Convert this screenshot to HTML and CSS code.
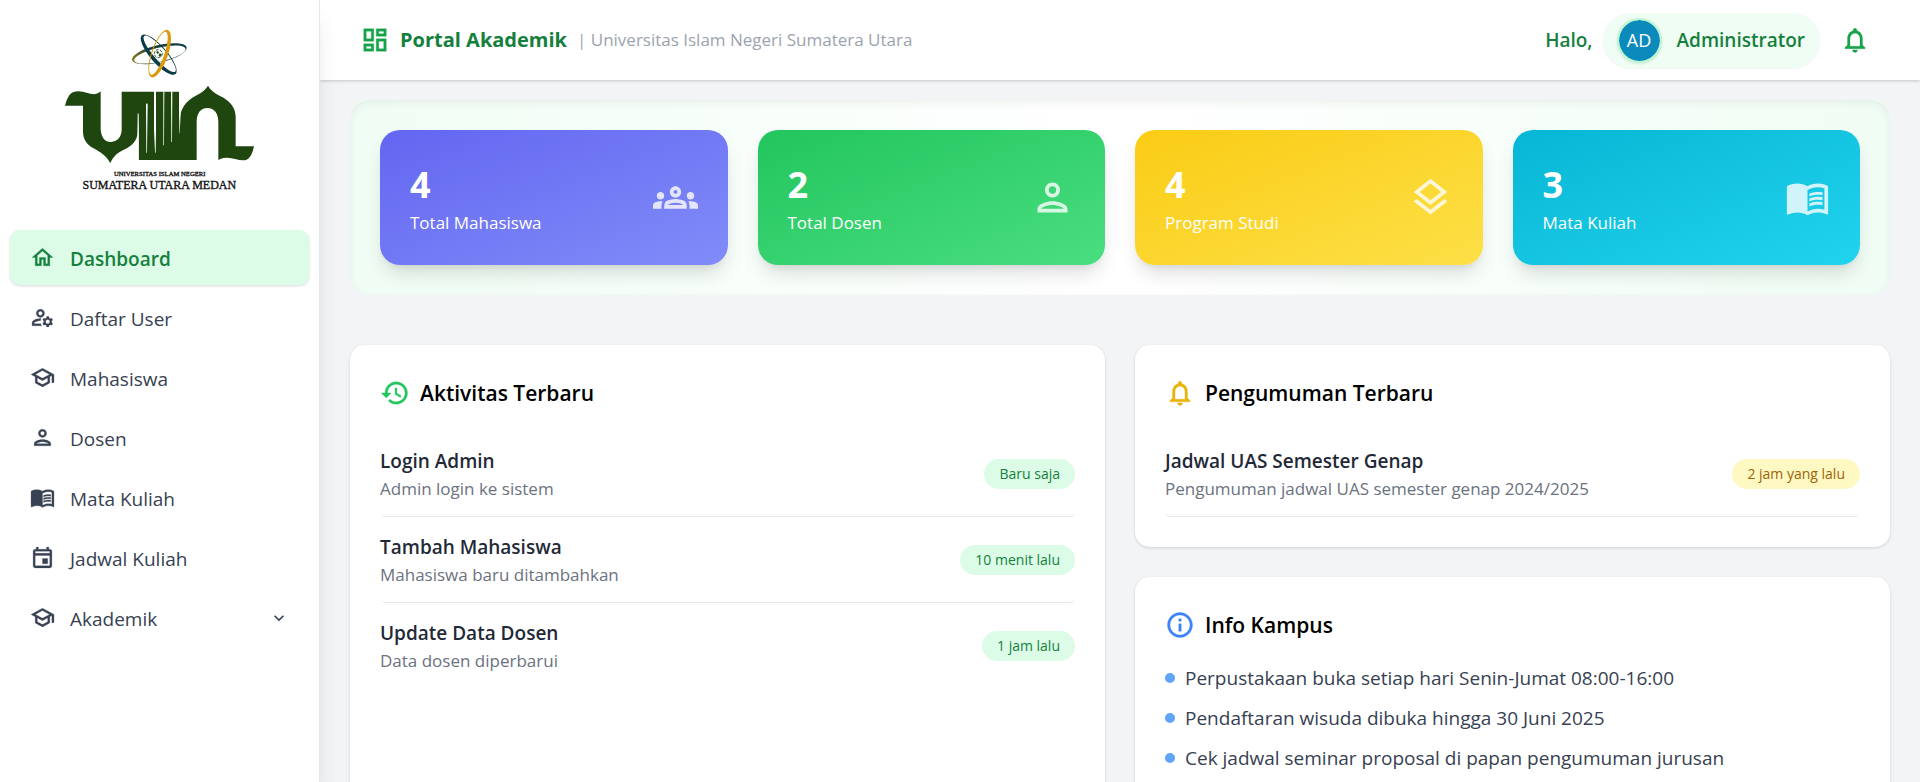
FILE: index.html
```html
<!DOCTYPE html>
<html lang="id">
<head>
<meta charset="utf-8">
<title>Portal Akademik</title>
<link rel="stylesheet" href="styles.css">
</head>
<body>
<svg class="sprite" aria-hidden="true">
  <symbol id="i-book" viewBox="0 0 24 24"><path d="M21 5c-1.11-.35-2.33-.5-3.5-.5-1.95 0-4.05.4-5.5 1.5-1.45-1.1-3.55-1.5-5.5-1.5S2.45 4.9 1 6v14.65c0 .25.25.5.5.5.1 0 .15-.05.25-.05C3.1 20.45 5.05 20 6.5 20c1.95 0 4.05.4 5.5 1.5 1.35-.85 3.8-1.5 5.5-1.5 1.65 0 3.35.3 4.75 1.05.1.05.15.05.25.05.25 0 .5-.25.5-.5V6c-.6-.45-1.25-.75-2-1zm0 13.5c-1.1-.35-2.3-.5-3.5-.5-1.7 0-4.15.65-5.5 1.5V8c1.35-.85 3.8-1.5 5.5-1.5 1.2 0 2.4.15 3.5.5v11.5z"/><path d="M17.5 10.5c.88 0 1.73.09 2.5.26V9.24c-.79-.15-1.64-.24-2.5-.24-1.7 0-3.24.29-4.5.83v1.66c1.13-.64 2.7-.99 4.5-.99zM13 12.49v1.66c1.13-.64 2.7-.99 4.5-.99.88 0 1.73.09 2.5.26V11.9c-.79-.15-1.64-.24-2.5-.24-1.7 0-3.24.3-4.5.83zM17.5 14.33c-1.7 0-3.24.29-4.5.83v1.66c1.13-.64 2.7-.99 4.5-.99.88 0 1.73.09 2.5.26v-1.52c-.79-.16-1.64-.24-2.5-.24z"/></symbol>
  <symbol id="i-school" viewBox="0 0 24 24"><path d="M12 3L1 9l4 2.18v6L12 21l7-3.82v-6l2-1.09V17h2V9L12 3zm6.82 6L12 12.72 5.18 9 12 5.28 18.82 9zM17 15.99l-5 2.73-5-2.73v-3.72L12 15l5-2.73v3.72z"/></symbol>
  <symbol id="i-person" viewBox="0 0 24 24"><path d="M12 6c1.1 0 2 .9 2 2s-.9 2-2 2-2-.9-2-2 .9-2 2-2m0 10c2.7 0 5.8 1.29 6 2H6c.23-.72 3.31-2 6-2m0-12C9.79 4 8 5.79 8 8s1.79 4 4 4 4-1.79 4-4-1.79-4-4-4zm0 10c-2.67 0-8 1.34-8 4v2h16v-2c0-2.66-5.33-4-8-4z"/></symbol>
  <symbol id="i-bell" viewBox="0 0 24 24"><path d="M12 22c1.1 0 2-.9 2-2h-4c0 1.1.9 2 2 2zm6-6v-5c0-3.07-1.63-5.64-4.5-6.32V4c0-.83-.67-1.5-1.5-1.5s-1.5.67-1.5 1.5v.68C7.64 5.36 6 7.92 6 11v5l-2 2v1h16v-1l-2-2zm-2 1H8v-6c0-2.48 1.51-4.5 4-4.5s4 2.02 4 4.5v6z"/></symbol>
</svg>

<div class="app">
  <aside class="sidebar">
    <div class="brand">
      <svg class="brand-logo" viewBox="180 80 600 510" role="img" aria-label="Universitas Islam Negeri Sumatera Utara Medan">
        <defs>
          <linearGradient id="orbit" x1="0" x2="1"><stop offset="0" stop-color="#8c7a1c"/><stop offset=".35" stop-color="#17403c"/><stop offset="1" stop-color="#0b3b44"/></linearGradient>
        </defs>
        <g fill-rule="evenodd">
          <g transform="translate(478 163) rotate(-13)"><path fill="url(#orbit)" d="M-84 0a84 26 0 1 0 168 0a84 26 0 1 0-168 0zM-78 3a79 21 0 1 0 158 0a79 21 0 1 0-158 0z"/></g>
          <g transform="translate(476 166) rotate(49)"><path fill="#0b3b44" d="M-77 0a77 25 0 1 0 154 0a77 25 0 1 0-154 0zM-71 -4a71 18 0 1 0 142 0a71 18 0 1 0-142 0z"/></g>
          <g transform="translate(479 163) rotate(-71)"><path fill="#d69a0c" d="M-75 0a75 25 0 1 0 150 0a75 25 0 1 0-150 0zM-68 -4a68 18 0 1 0 136 0a68 18 0 1 0-136 0z"/></g>
        </g>
        <circle cx="475" cy="163" r="12" fill="none" stroke="#2d5f2b" stroke-width="3" stroke-dasharray="9 3"/>
        <path d="M468 158l6-3 3 5-4 4zM478 162l7 2-4 9-5-3z" fill="#1f4a10"/>
        <path fill="#1f460f" d="M195 319C203 294 208 276 236 276C252 276 268 285 282 285C292 284 297 280 302 276V388C303 414 315 428 333 428C353 427 365 412 365 390V277H537V365C541 330 556 305 590 288C606 280 617 270 624 259C631 271 642 281 660 290C690 304 707 325 707 352V441H762C758 462 750 478 738 482C718 486 700 474 678 475C668 476 661 478 655 482V368C655 342 643 326 622 326C601 326 590 343 590 368V482H416V345L413 400C411 425 396 440 370 452C350 461 340 472 331 491C321 474 309 463 290 452C264 440 249 425 249 396V319Z"/>
        <path fill="#fff" d="M412.500 388L413 344Q414 340 416 344L416 484H413ZM438 316Q441 308 443 316L441 460H439ZM462 276H468V400L467 460H465L462 390ZM490 276H493L492 438H490ZM513 276H517L516 428H514ZM537 276H542V345L539 402H538Z"/>
        <text class="logo-small" x="479" y="529" text-anchor="middle">UNIVERSITAS ISLAM NEGERI</text>
        <text class="logo-large" x="478" y="570" text-anchor="middle">SUMATERA UTARA MEDAN</text>
      </svg>
    </div>
    <nav class="menu">
      <a class="menu-item active" href="#dashboard"><svg class="icon" viewBox="0 0 24 24"><path d="M12 5.690l5 4.500V18h-2v-6H9v6H7v-7.810l5-4.500M12 3L2 12h3v8h6v-6h2v6h6v-8h3L12 3z"/></svg><span>Dashboard</span></a>
      <a class="menu-item" href="#user"><svg class="icon" viewBox="0 0 24 24"><path d="M4 18v-.65c0-.34.16-.66.41-.81C6.1 15.53 8.03 15 10 15c.03 0 .05 0 .08.01.1-.7.3-1.37.59-1.98-.22-.02-.44-.03-.67-.03-2.42 0-4.68.67-6.61 1.82-.88.52-1.39 1.5-1.39 2.53V20h9.26c-.42-.6-.75-1.28-.97-2H4zM10 12c2.21 0 4-1.79 4-4s-1.790-4-4-4-4 1.790-4 4 1.790 4 4 4zm0-6c1.100 0 2 .9 2 2s-.9 2-2 2-2-.9-2-2 .9-2 2-2zM20.750 16c0-.22-.03-.42-.06-.63l1.140-1.010-1-1.730-1.450.49c-.32-.27-.68-.48-1.080-.63L18 11h-2l-.3 1.490c-.4.15-.76.36-1.080.63l-1.450-.49-1 1.730 1.140 1.010c-.03.21-.06.41-.06.63s.03.42.06.63l-1.140 1.010 1 1.730 1.450-.49c.32.27.68.48 1.080.63L16 21h2l.3-1.490c.4-.15.76-.36 1.080-.63l1.450.49 1-1.730-1.140-1.010c.03-.21.06-.41.06-.63zM17 18c-1.100 0-2-.9-2-2s.9-2 2-2 2 .9 2 2-.9 2-2 2z"/></svg><span>Daftar User</span></a>
      <a class="menu-item" href="#mahasiswa"><svg class="icon"><use href="#i-school"/></svg><span>Mahasiswa</span></a>
      <a class="menu-item" href="#dosen"><svg class="icon"><use href="#i-person"/></svg><span>Dosen</span></a>
      <a class="menu-item" href="#matakuliah"><svg class="icon"><use href="#i-book"/></svg><span>Mata Kuliah</span></a>
      <a class="menu-item" href="#jadwal"><svg class="icon" viewBox="0 0 24 24"><path d="M19 4h-1V2h-2v2H8V2H6v2H5c-1.110 0-1.990.9-1.990 2L3 20a2 2 0 0 0 2 2h14c1.100 0 2-.9 2-2V6c0-1.100-.9-2-2-2zm0 16H5V10h14v10zm0-12H5V6h14v2zm-7 5h5v5h-5v-5z"/></svg><span>Jadwal Kuliah</span></a>
      <button class="menu-item" type="button" aria-expanded="false"><svg class="icon"><use href="#i-school"/></svg><span>Akademik</span><svg class="chevron" viewBox="0 0 24 24"><path d="M16.590 8.590L12 13.170 7.410 8.590 6 10l6 6 6-6z"/></svg></button>
    </nav>
  </aside>

  <div class="page">
    <header class="topbar">
      <svg class="icon-lg green" viewBox="0 0 24 24"><path d="M19 5v2h-4V5h4M9 5v6H5V5h4m10 8v6h-4v-6h4M9 17v2H5v-2h4M21 3h-8v6h8V3zM11 3H3v10h8V3zm10 8h-8v10h8V11zm-10 4H3v6h8v-6z"/></svg>
      <h1 class="title">Portal Akademik</h1>
      <span class="subtitle">| Universitas Islam Negeri Sumatera Utara</span>
      <div class="account">
        <span class="hello">Halo,</span>
        <button class="profile" type="button"><span class="avatar">AD</span><span>Administrator</span></button>
      </div>
      <button class="bell" type="button" aria-label="Notifikasi"><svg class="icon-lg green"><use href="#i-bell"/></svg></button>
    </header>

    <main class="content">
      <section class="stats">
        <div class="stat indigo"><div><strong>4</strong><span>Total Mahasiswa</span></div><svg class="icon-xl" viewBox="0 0 24 24"><path d="M4 13c1.100 0 2-.9 2-2s-.9-2-2-2-2 .9-2 2 .9 2 2 2zm1.130 1.100c-.37-.06-.74-.1-1.130-.1-.99 0-1.930.21-2.780.58C.48 14.900 0 15.620 0 16.430V18h4.500v-1.610c0-.83.23-1.610.63-2.290zM20 13c1.100 0 2-.9 2-2s-.9-2-2-2-2 .9-2 2 .9 2 2 2zm4 3.430c0-.81-.48-1.530-1.220-1.850-.85-.37-1.790-.58-2.780-.58-.39 0-.76.04-1.130.1.4.68.63 1.460.63 2.290V18H24v-1.570zm-7.760-2.780c-1.170-.52-2.610-.9-4.240-.9s-3.070.39-4.240.9C6.680 14.130 6 15.210 6 16.390V18h12v-1.610c0-1.180-.68-2.260-1.760-2.740zM8.070 16c.09-.23.13-.39.91-.69.97-.38 1.990-.56 3.020-.56s2.050.18 3.020.56c.77.3.81.46.91.69H8.070zM12 8c.55 0 1 .45 1 1s-.45 1-1 1-1-.45-1-1 .45-1 1-1m0-2c-1.660 0-3 1.340-3 3s1.340 3 3 3 3-1.340 3-3-1.340-3-3-3z"/></svg></div>
        <div class="stat emerald"><div><strong>2</strong><span>Total Dosen</span></div><svg class="icon-xl"><use href="#i-person"/></svg></div>
        <div class="stat yellow"><div><strong>4</strong><span>Program Studi</span></div><svg class="icon-xl" viewBox="0 0 24 24"><path d="M11.990 18.540l-7.370-5.730L3 14.070l9 7 9-7-1.630-1.270-7.380 5.740zM12 16l7.360-5.730L21 9l-9-7-9 7 1.630 1.270L12 16zm0-11.470L17.740 9 12 13.470 6.260 9 12 4.530z"/></svg></div>
        <div class="stat cyan"><div><strong>3</strong><span>Mata Kuliah</span></div><svg class="icon-xl"><use href="#i-book"/></svg></div>
      </section>

      <div class="columns">
        <section class="card">
          <h2 class="card-title"><svg class="icon-lg lime" viewBox="0 0 24 24"><path d="M13 3c-4.970 0-9 4.030-9 9H1l3.890 3.890.07.14L9 12H6c0-3.870 3.130-7 7-7s7 3.130 7 7-3.130 7-7 7c-1.930 0-3.680-.79-4.940-2.060l-1.420 1.420C8.270 19.990 10.510 21 13 21c4.970 0 9-4.030 9-9s-4.030-9-9-9zm-1 5v5l4.250 2.520.77-1.280-3.520-2.090V8z"/></svg>Aktivitas Terbaru</h2>
          <ul class="feed">
            <li><div><b>Login Admin</b><p>Admin login ke sistem</p></div><span class="tag">Baru saja</span></li>
            <li><div><b>Tambah Mahasiswa</b><p>Mahasiswa baru ditambahkan</p></div><span class="tag">10 menit lalu</span></li>
            <li class="plain"><div><b>Update Data Dosen</b><p>Data dosen diperbarui</p></div><span class="tag">1 jam lalu</span></li>
          </ul>
        </section>
        <div class="stack">
          <section class="card">
            <h2 class="card-title"><svg class="icon-lg amber"><use href="#i-bell"/></svg>Pengumuman Terbaru</h2>
            <ul class="feed">
              <li><div><b>Jadwal UAS Semester Genap</b><p>Pengumuman jadwal UAS semester genap 2024/2025</p></div><span class="tag tag-yellow">2 jam yang lalu</span></li>
            </ul>
          </section>
          <section class="card">
            <h2 class="card-title"><svg class="icon-lg blue" viewBox="0 0 24 24"><path d="M11 7h2v2h-2zm0 4h2v6h-2zm1-9C6.480 2 2 6.480 2 12s4.480 10 10 10 10-4.480 10-10S17.520 2 12 2zm0 18c-4.410 0-8-3.590-8-8s3.590-8 8-8 8 3.590 8 8-3.590 8-8 8z"/></svg>Info Kampus</h2>
            <ul class="info">
              <li>Perpustakaan buka setiap hari Senin-Jumat 08:00-16:00</li>
              <li>Pendaftaran wisuda dibuka hingga 30 Juni 2025</li>
              <li>Cek jadwal seminar proposal di papan pengumuman jurusan</li>
            </ul>
          </section>
        </div>
      </div>
    </main>
  </div>
</div>
</body>
</html>
```
FILE: styles.css
```css
* { box-sizing: border-box; margin: 0; padding: 0; }
body {
  font-family: "Open Sans", "Noto Sans", sans-serif;
  font-size: 19px;
  line-height: 30px;
  color: #374151;
  background: #f3f4f6;
}
a { color: inherit; text-decoration: none; }
button { font: inherit; color: inherit; background: none; border: 0; cursor: pointer; }
ul { list-style: none; }
svg { fill: currentColor; flex: none; display: block; }
.sprite { display: none; }

.icon, .icon-lg { stroke: currentColor; stroke-width: .25; }
.icon { width: 25px; height: 25px; }
.icon-lg { width: 30px; height: 30px; }
.icon-xl { width: 45px; height: 45px; opacity: .8; }
.green { color: #16a34a; }
.lime { color: #22c55e; }
.amber { color: #eab308; }
.blue { color: #3b82f6; }

.app { display: flex; height: 100vh; overflow: hidden; }

.sidebar {
  position: relative;
  z-index: 2;
  flex: 0 0 320px;
  background: #fff;
  border-right: 1px solid #e5e7eb;
  box-shadow: 0 20px 25px -5px rgba(0, 0, 0, .1), 0 8px 10px -6px rgba(0, 0, 0, .1);
}
.brand { display: flex; justify-content: center; height: 230px; padding-top: 26px; }
.brand-logo { width: 200px; height: 170px; }
.logo-small, .logo-large { font-family: "Liberation Serif", serif; fill: #111; stroke: #111; stroke-width: 1px; }
.logo-small { font-size: 20px; }
.logo-large { font-size: 36px; }

.menu { display: flex; flex-direction: column; gap: 5px; padding: 0 10px; }
.menu-item {
  display: flex;
  align-items: center;
  gap: 15px;
  height: 55px;
  padding: 0 20px;
  border-radius: 10px;
  text-align: left;
}
.menu-item span { padding-top: 2px; }
.menu-item.active {
  color: #15803d;
  font-weight: 600;
  background: #dcfce7;
  box-shadow: 0 1px 3px rgba(0, 0, 0, .15);
}
.chevron { width: 20px; height: 20px; margin-left: auto; }

.page { flex: 1; min-width: 0; display: flex; flex-direction: column; }
.topbar {
  position: relative;
  z-index: 1;
  display: flex;
  align-items: center;
  flex: 0 0 80px;
  padding: 0 50px 0 40px;
  background: #fff;
  box-shadow: 0 1px 3px rgba(0, 0, 0, .2);
}
.title { margin-left: 10px; font-size: 20px; font-weight: 700; color: #15803d; }
.subtitle { margin-left: 10px; font-size: 17px; color: #9ca3af; }
.account {
  display: flex;
  align-items: center;
  gap: 10px;
  margin-left: auto;
  font-weight: 600;
  color: #15803d;
}
.profile {
  display: flex;
  align-items: center;
  gap: 15px;
  height: 55px;
  padding: 0 15px 0 14px;
  border-radius: 28px;
  background: #f0fdf4;
  box-shadow: 0 1px 2px rgba(0, 0, 0, .05);
}
.avatar {
  width: 45px;
  height: 45px;
  line-height: 41px;
  border: 2px solid #bbf7d0;
  border-radius: 50%;
  font-size: 18px;
  font-weight: 400;
  text-align: center;
  color: #fff;
  background: #0d8abc;
  background-clip: padding-box;
  box-shadow: 0 1px 3px rgba(0, 0, 0, .1);
}
.bell { margin-left: 20px; }

.content { flex: 1; min-height: 0; padding: 20px 30px; overflow-y: auto; scrollbar-width: none; }
.stats {
  display: grid;
  grid-template-columns: repeat(4, 1fr);
  gap: 30px;
  margin-bottom: 50px;
  padding: 30px;
  border-radius: 20px;
  background: linear-gradient(to right, #f0fdf4, #fff 50%, #f0fdf4);
  box-shadow: inset 0 3px 8px rgba(0, 0, 0, .06);
}
.stat {
  display: flex;
  align-items: center;
  justify-content: space-between;
  padding: 30px;
  border-radius: 20px;
  color: #fff;
  box-shadow: 0 12px 19px -4px rgba(0, 0, 0, .13), 0 5px 8px -5px rgba(0, 0, 0, .1);
}
.stat strong { display: block; font-size: 36px; line-height: 50px; font-weight: 700; }
.stat span { display: block; font-size: 17px; line-height: 25px; }
.indigo { background: linear-gradient(to bottom right, #6366f1, #818cf8); }
.emerald { background: linear-gradient(to bottom right, #22c55e, #4ade80); }
.yellow { background: linear-gradient(to bottom right, #facc15, #fde047); }
.cyan { background: linear-gradient(to bottom right, #06b6d4, #22d3ee); }

.columns { display: grid; grid-template-columns: 1fr 1fr; gap: 30px; }
.stack { display: flex; flex-direction: column; gap: 30px; }
.card {
  padding: 30px;
  border-radius: 15px;
  background: #fff;
  box-shadow: 0 1px 3px rgba(0, 0, 0, .15);
}
.card-title {
  display: flex;
  align-items: center;
  gap: 10px;
  margin-bottom: 20px;
  font-size: 21px;
  line-height: 36px;
  font-weight: 600;
  color: #000;
}
.feed li {
  display: flex;
  align-items: center;
  justify-content: space-between;
  height: 86px;
  border-bottom: 1px solid #e5e7eb;
  border-radius: 5px;
}
.feed .plain { border-bottom-color: transparent; }
.feed b { display: block; line-height: 30px; font-weight: 600; color: #1f2937; }
.feed p { font-size: 17px; line-height: 25px; color: #6b7280; }
.tag {
  padding: 0 15px;
  border-radius: 15px;
  font-size: 14px;
  line-height: 30px;
  color: #15803d;
  background: #dcfce7;
}
.tag-yellow { color: #a16207; background: #fef9c3; }

.info { display: flex; flex-direction: column; gap: 10px; }
.info li { display: flex; align-items: center; gap: 10px; }
.info li::before { content: ""; width: 10px; height: 10px; border-radius: 50%; background: #60a5fa; }
```
